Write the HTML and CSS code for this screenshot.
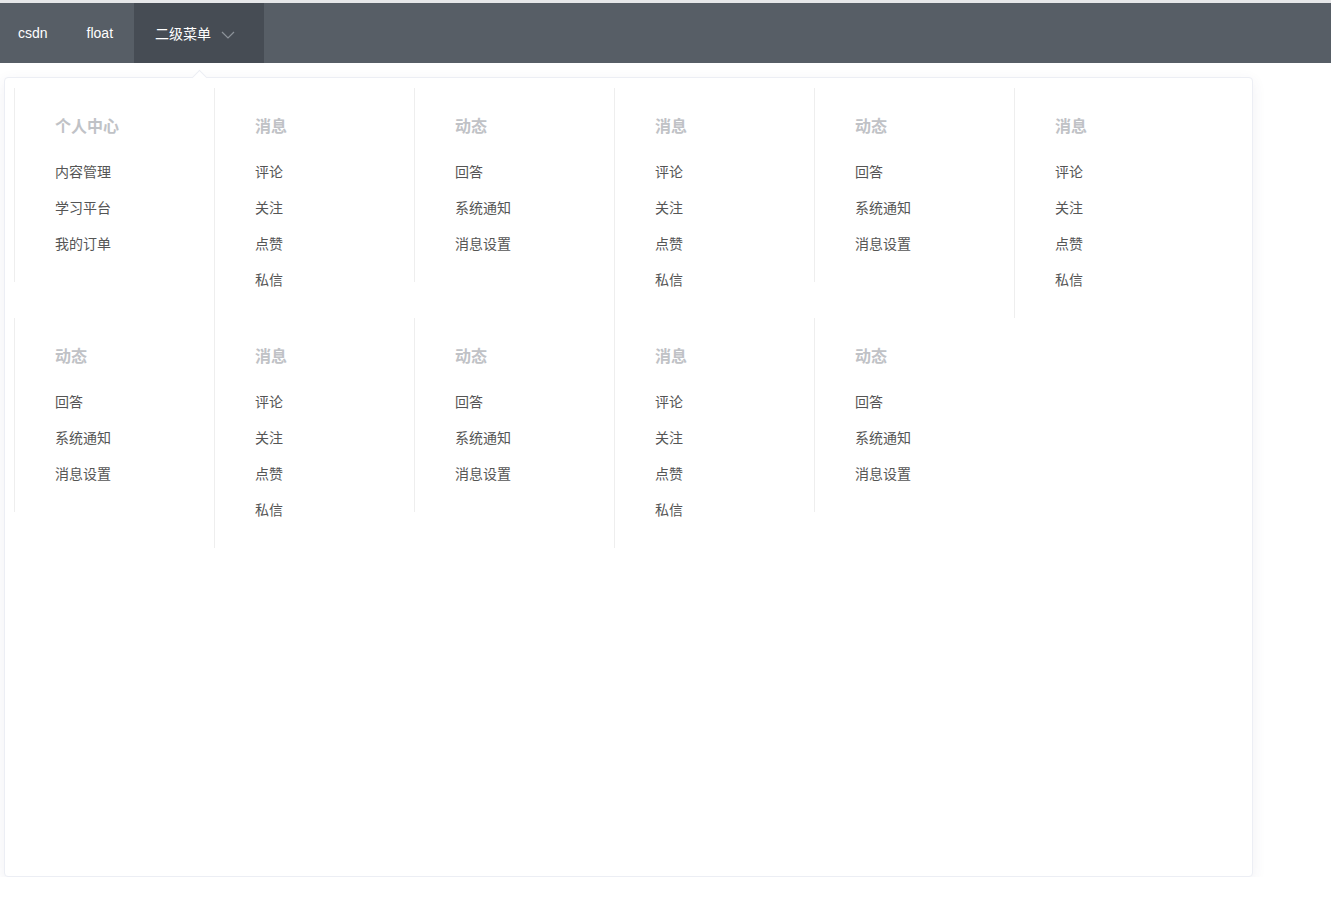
FILE: index.html
```html
<!DOCTYPE html>
<html lang="zh-CN">
<head>
    <meta charset="UTF-8">
    <title>二级菜单</title>
    <link rel="stylesheet" href="styles.css">
</head>
<body>
    <div class="nav">
        <a class="nav-item" href="#">csdn</a>
        <a class="nav-item" href="#">float</a>
        <div class="nav-item active">
            二级菜单
            <svg class="arrow" width="14" height="8" viewBox="0 0 14 8"><path d="M1 1 L7 7 L13 1" fill="none" stroke="#8d939a" stroke-width="1.2"/></svg>
        </div>
    </div>

    <div class="dropdown">
        <div class="col">
            <h3>个人中心</h3>
            <ul><li>内容管理</li><li>学习平台</li><li>我的订单</li></ul>
        </div>
        <div class="col">
            <h3>消息</h3>
            <ul><li>评论</li><li>关注</li><li>点赞</li><li>私信</li></ul>
        </div>
        <div class="col">
            <h3>动态</h3>
            <ul><li>回答</li><li>系统通知</li><li>消息设置</li></ul>
        </div>
        <div class="col">
            <h3>消息</h3>
            <ul><li>评论</li><li>关注</li><li>点赞</li><li>私信</li></ul>
        </div>
        <div class="col">
            <h3>动态</h3>
            <ul><li>回答</li><li>系统通知</li><li>消息设置</li></ul>
        </div>
        <div class="col">
            <h3>消息</h3>
            <ul><li>评论</li><li>关注</li><li>点赞</li><li>私信</li></ul>
        </div>
        <div class="col">
            <h3>动态</h3>
            <ul><li>回答</li><li>系统通知</li><li>消息设置</li></ul>
        </div>
        <div class="col">
            <h3>消息</h3>
            <ul><li>评论</li><li>关注</li><li>点赞</li><li>私信</li></ul>
        </div>
        <div class="col">
            <h3>动态</h3>
            <ul><li>回答</li><li>系统通知</li><li>消息设置</li></ul>
        </div>
        <div class="col">
            <h3>消息</h3>
            <ul><li>评论</li><li>关注</li><li>点赞</li><li>私信</li></ul>
        </div>
        <div class="col">
            <h3>动态</h3>
            <ul><li>回答</li><li>系统通知</li><li>消息设置</li></ul>
        </div>
    </div>
</body>
</html>
```

FILE: styles.css
```css
/* Base */
* {
    margin: 0;
    padding: 0;
    box-sizing: border-box;
}

body {
    font-family: "Liberation Sans", "Noto Sans CJK SC", sans-serif;
    background: #fff;
    border-top: 3px solid #e6e7e9;
}

/* Top bar */
.nav {
    height: 60px;
    background: #575e66;
    display: flex;
}

.nav-item {
    display: flex;
    align-items: center;
    height: 60px;
    padding: 0 21px 0 18px;
    color: #fff;
    font-size: 14px;
    text-decoration: none;
}

.nav-item.active {
    background: #464c54;
    padding: 0 29px 0 21px;
}

.arrow {
    margin-left: 10px;
    margin-top: 4px;
}

/* Dropdown panel */
.dropdown {
    position: relative;
    width: 1249px;
    height: 800px;
    margin: 14px 0 0 4px;
    padding: 10px 9px;
    background: #fff;
    border: 1px solid #eceef4;
    border-radius: 4px;
    box-shadow: 0 4px 14px rgba(60, 70, 120, 0.08);
}

.dropdown::before {
    content: "";
    position: absolute;
    top: -6px;
    left: 189px;
    width: 10px;
    height: 10px;
    background: #fff;
    border-left: 1px solid #eceef4;
    border-top: 1px solid #eceef4;
    transform: rotate(45deg);
}

.col {
    float: left;
    width: 200px;
    padding: 29px 40px 20px;
    border-left: 1px solid #eeeeee;
}

.col h3 {
    height: 20px;
    line-height: 20px;
    font-size: 16px;
    font-weight: bold;
    color: #c0c2c6;
    margin-bottom: 17px;
}

.col ul {
    list-style: none;
}

.col li {
    height: 36px;
    line-height: 36px;
    font-size: 14px;
    color: #555;
}
```
